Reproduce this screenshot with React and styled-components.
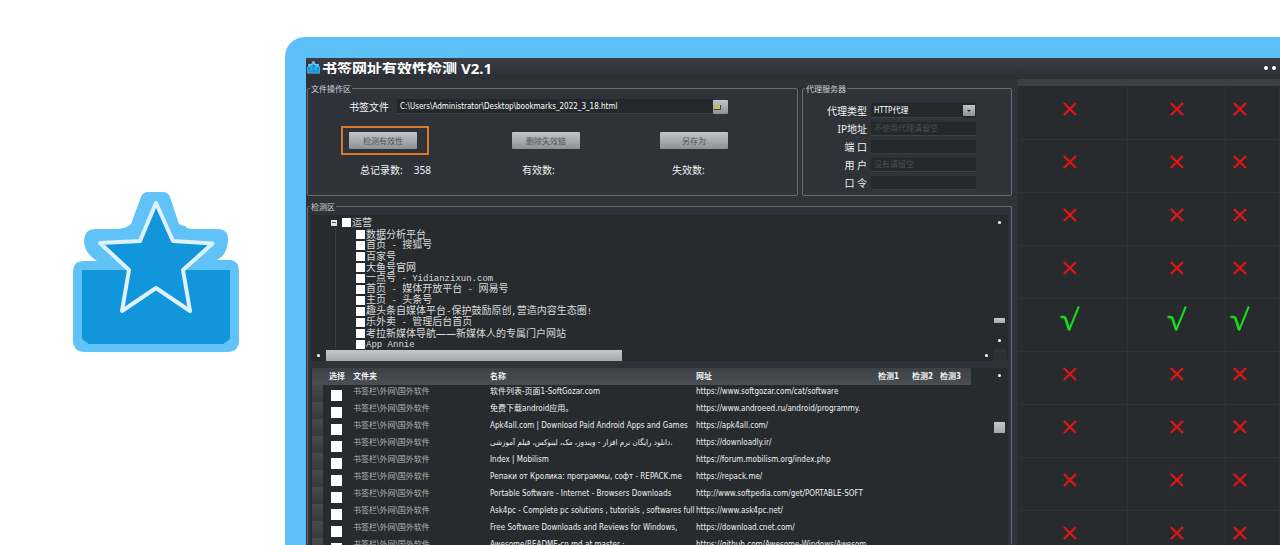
import React from 'react';
import styled, { createGlobalStyle, css } from 'styled-components';

const sky = '#5dc1f7';
const panel = '#2f3238';
const well = '#272b2d';
const line = '#686b70';
const ui = "'Noto Sans', 'Noto Sans CJK SC', sans-serif";
const dense = "'DejaVu Sans Condensed', 'Noto Sans CJK SC', sans-serif";
const silver = 'linear-gradient(#c2c5c8, #8d9095)';

const Global = createGlobalStyle`
  * { box-sizing: border-box; }
  body { margin: 0; background: #fff; font-family: ${ui}; }
`;

const Page = styled.main`
  display: flex;
  height: 100vh;
  overflow: hidden;
`;

const Brand = styled.aside`
  flex: none;
  width: 285px;
  padding: 190px 0 0 71px;
`;

const Frame = styled.section`
  flex: 1;
  min-width: 0;
  margin-top: 37px;
  padding: 21px 0 0 21px;
  background: ${sky};
  border-top-left-radius: 20px;
  overflow: hidden;
`;

const Window = styled.div`
  display: flex;
  flex-direction: column;
  height: 100%;
  background: ${panel};
  color: #e8e8e8;
  overflow: hidden;
`;

const TitleBar = styled.header`
  display: flex;
  flex: none;
  align-items: center;
  height: 21px;
  padding: 0 3px 2px 1px;
  background: linear-gradient(#3b3d43, #2b2e34);
`;

const Title = styled.h1`
  flex: 1;
  height: 12px;
  margin: 0 0 0 2px;
  overflow: hidden;
  font-size: 15px;
  line-height: 12px;
  font-weight: 700;
  color: #fff;
  white-space: nowrap;
`;

const Body = styled.div`
  display: flex;
  flex: 1;
  min-height: 0;
`;

const Workspace = styled.div`
  display: flex;
  flex: 1;
  flex-direction: column;
  gap: 5px;
  min-width: 0;
  padding: 4px 6px 0 1px;
`;

const Groups = styled.div`
  display: flex;
  gap: 4px;
`;

const Group = styled.fieldset`
  flex: ${(p) => (p.$width ? 'none' : '1')};
  width: ${(p) => p.$width || 'auto'};
  height: ${(p) => p.$height || 'auto'};
  min-width: 0;
  min-height: 0;
  margin: 0;
  padding: 0;
  border: 1px solid ${line};
  border-radius: 2px;
`;

const GroupBody = styled.div`
  height: 100%;
  padding: ${(p) => p.$pad};
`;

const Legend = styled.legend`
  margin-left: 2px;
  padding: 0 1px;
  font-size: 8px;
  line-height: 11px;
  color: #d2d2d2;
`;

const field = css`
  min-width: 0;
  margin: 0;
  border: 0;
  border-bottom: 1px solid #3d4145;
  border-radius: 0;
  padding: 0 3px;
  outline: 0;
  background: #25282b;
  color: #fff;
  font-family: ${dense};
  font-size: 8px;
  &::placeholder { color: #4b4f53; opacity: 1; }
`;

const Input = styled.input`
  ${field}
  flex: 1;
  height: ${(p) => p.$h || '14px'};
`;

const Select = styled.select`
  ${field}
  appearance: none;
  flex: 1;
  height: 15px;
`;

const FileRow = styled.div`
  display: flex;
  align-items: center;
  padding: 0 69px 0 8px;
`;

const Label = styled.label`
  width: ${(p) => p.$w};
  font-size: 10px;
  line-height: 14px;
  color: #f2f2f2;
  white-space: pre;
  text-align: ${(p) => p.$align || 'left'};
`;

const SilverButton = styled.button`
  display: flex;
  align-items: center;
  justify-content: center;
  width: ${(p) => p.$w || '68px'};
  height: ${(p) => p.$h || '17px'};
  padding: 0;
  border: 0;
  border-radius: 1px;
  background: ${silver};
  color: #505357;
  font-family: ${ui};
  font-size: 8px;
`;

const Actions = styled.div`
  display: grid;
  grid-template-columns: 171px 148px 1fr;
  align-items: center;
  margin-top: 12px;
`;

const Highlight = styled.div`
  justify-self: start;
  padding: 4px 10px 4px 6px;
  border: 2px solid #d97a2b;
`;

const Counts = styled.dl`
  display: grid;
  grid-template-columns: 162px 150px 1fr;
  margin: 8px 0 0 19px;
  font-size: 10px;
  line-height: 14px;
  color: #f2f2f2;
`;

const Count = styled.div`
  display: flex;
  gap: 11px;
  dt, dd { margin: 0; }
`;

const ProxyForm = styled.div`
  display: flex;
  flex-direction: column;
  gap: 4px;
`;

const ProxyRow = styled.div`
  display: flex;
  align-items: center;
  gap: 4px;
`;

const Detection = styled(Group)`
  flex: 1;
  border-bottom: 0;
`;

const Stack = styled.div`
  display: flex;
  flex-direction: column;
  gap: 7px;
  height: 100%;
`;

const TreePane = styled.div`
  display: grid;
  grid-template-columns: 1fr 14px;
  grid-template-rows: 134px 12px;
  flex: none;
  background: ${well};
`;

const Tree = styled.ul`
  margin: 0;
  padding: 2px 0 0 20px;
  overflow: hidden;
  list-style: none;
  color: #dadada;
`;

const Branch = styled.ul`
  margin: 0 0 0 4px;
  padding: 1px 0 0 20px;
  list-style: none;
  border-left: 1px solid #3a3e41;
`;

const TreeRow = styled.label`
  display: flex;
  align-items: center;
  gap: 1px;
  height: 11px;
  font-size: 10px;
  line-height: 11px;
  white-space: pre;
`;

const Toggle = styled.button`
  flex: none;
  width: 6px;
  height: 6px;
  margin-right: 4px;
  padding: 0;
  border: 0;
  background: linear-gradient(#555, #555) center / 4px 1px no-repeat #e4e4e4;
`;

const Latin = styled.span`
  font-family: 'Liberation Mono', monospace;
  font-size: 9px;
`;

const Check = styled.input`
  appearance: none;
  flex: none;
  display: block;
  width: ${(p) => p.$s};
  height: ${(p) => p.$s};
  margin: 0;
  background: #fff;
`;

const VBar = styled.div`
  display: flex;
  flex-direction: column;
  align-items: center;
  padding: 6px 3px 0 0;
`;

const HBar = styled.div`
  display: flex;
  align-items: center;
  padding: 0 6px;
`;

const Dot = styled.span`
  flex: none;
  width: 3px;
  height: 3px;
  border-radius: 50%;
  background: #fff;
`;

const Thumb = styled.span`
  flex: none;
  width: ${(p) => p.$w};
  height: ${(p) => p.$h};
  margin: ${(p) => p.$m || '0'};
  background: linear-gradient(#c4c6ca, #a5a8ac);
`;

const Corner = styled.div`
  margin-right: 2px;
  background: #2e3135;
`;

const ListPane = styled.div`
  display: grid;
  grid-template-columns: 1fr 14px;
  flex: 1;
  min-height: 0;
  padding-left: 1px;
  background: ${well};
  overflow: hidden;
`;

const List = styled.table`
  width: calc(100% - 23px);
  table-layout: fixed;
  border-collapse: collapse;
  align-self: start;
  font-family: ${dense};
  font-size: 8px;
  line-height: 14px;
  color: #f0f0f0;

  th, td {
    height: 17px;
    padding: 0 0 3px;
    overflow: hidden;
    text-align: left;
    white-space: nowrap;
  }
  thead tr { background: linear-gradient(#3d4045, #4b4e53); }
  th { padding: 0; font-weight: 700; }
  th:nth-child(2) { padding-left: 6px; }
  td:nth-child(2) { padding: 3px 0 0 8px; }
  tbody td:first-child { background: linear-gradient(#474a4f, #36393e); }
  td:nth-child(3) { color: #b4b4b4; }
`;

const Results = styled.table`
  flex: none;
  align-self: flex-start;
  width: 262px;
  table-layout: fixed;
  border-collapse: collapse;
  background: ${well};

  th {
    height: 7px;
    padding: 0;
    background: #3c3e44;
  }
  td {
    height: 53px;
    padding: 0 4px 10px 0;
    border: solid #2f3336;
    border-width: 0 1px 1px 0;
    text-align: center;
    vertical-align: middle;
  }
  td:nth-child(2) { padding-left: 6px; }
  td:last-child { padding-right: 24px; }
  svg { display: inline-block; vertical-align: middle; }
`;

const Cross = () => (
  <svg width="16" height="16" viewBox="0 0 16 16" role="img" aria-label="无效">
    <path d="M1.800 2 14 14M14 2 1.800 14" stroke="#e01515" strokeWidth="2.300" fill="none" />
  </svg>
);

const Tick = () => (
  <svg width="20" height="28" viewBox="0 0 20 28" role="img" aria-label="有效">
    <path d="M0.500 11H3.500Q5 11 5.500 12.500L9.200 24" stroke="#18dc18" strokeWidth="2.600" fill="none" />
    <path d="M9 24.500 18.800 0.500" stroke="#18dc18" strokeWidth="2" fill="none" />
  </svg>
);

const STAR = 'M85 13 102 51 141.500 53.500 112 80 119 121 85 98 51 121 58 80 29 53 69 51Z';

const Logo = ({ size }) => (
  <svg width={size} height={size} viewBox="0 0 170 170" aria-hidden="true">
    <path
      d="M77 2H91Q97 2 99 7L108 34Q112 36 114 36Q116 39 122 39H148Q158 40 157 51Q156 65 146 70H160Q168 71 168 82V150Q168 162 156 162H14Q2 162 2 150V82Q2 71 13 71H26Q13 63 13 50Q14 39 24 39H47Q56 38 60 34L70 7Q72 2 77 2Z"
      fill="#60c2f6"
    />
    <path d="M11 80H159V149L152 154H18L11 149Z" fill="#1296db" />
    <path d={STAR} fill="#1296db" stroke="#dff1fd" strokeWidth="4" strokeLinejoin="round" />
  </svg>
);

const FolderIcon = () => (
  <svg width="15" height="14" viewBox="0 0 15 14" aria-hidden="true">
    <path d="M1 9V7.500L3 6L4 5H5.500V6H7V9Z" fill="#c9c24a" />
    <path d="M1 9.500H7.500V5" stroke="#44443a" fill="none" />
  </svg>
);

const SelectWrap = styled.div`
  display: flex;
  align-items: center;
  flex: 1;
  min-width: 0;
  background: #25282b;
`;

const Arrow = styled.span`
  display: grid;
  place-items: center;
  flex: none;
  width: 12px;
  height: 11px;
  margin-right: 1px;
  background: ${silver};
  &::before {
    content: '';
    border: 2px solid transparent;
    border-top-color: #222;
    border-bottom: 0;
  }
`;

const sites = [
  ['数据分析平台'],
  ['首页', ' - ', '搜狐号'],
  ['百家号'],
  ['大鱼号官网'],
  ['一点号', ' - Yidianzixun.com'],
  ['首页', ' - ', '媒体开放平台', ' - ', '网易号'],
  ['主页', ' - ', '头条号'],
  ['趣头条自媒体平台', '-', '保护鼓励原创', ',', '营造内容生态圈', '!'],
  ['乐外卖', ' - ', '管理后台首页'],
  ['考拉新媒体导航——新媒体人的专属门户网站'],
  ['', 'App Annie'],
];

const links = [
  ['软件列表-页面1-SoftGozar.com', 'https://www.softgozar.com/cat/software'],
  ['免费下载android应用。', 'https://www.androeed.ru/android/programmy.'],
  ['Apk4all.com | Download Paid Android Apps and Games', 'https://apk4all.com/'],
  ['دانلود رایگان نرم افزار - ویندوز، مک، لینوکس، فیلم آموزشی.', 'https://downloadly.ir/'],
  ['Index | Mobilism', 'https://forum.mobilism.org/index.php'],
  ['Репаки от Кролика: программы, софт - REPACK.me', 'https://repack.me/'],
  ['Portable Software - Internet - Browsers Downloads', 'http://www.softpedia.com/get/PORTABLE-SOFT'],
  ['Ask4pc - Complete pc solutions , tutorials , softwares full', 'https://www.ask4pc.net/'],
  ['Free Software Downloads and Reviews for Windows,', 'https://download.cnet.com/'],
  ['Awesome/README-cn.md at master ·', 'https://github.com/Awesome-Windows/Awesom'],
];

const results = [false, false, false, false, true, false, false, false, false];

export default function App() {
  return (
    <>
      <Global />
      <Page>
        <Brand><Logo size={170} /></Brand>
        <Frame>
          <Window>
            <TitleBar>
              <Logo size={13} />
              <Title>书签网址有效性检测 V2.1</Title>
              <svg width="14" height="6" viewBox="0 0 14 6" aria-hidden="true">
                <circle cx="3" cy="3" r="2" fill="#fff" />
                <circle cx="11" cy="3" r="2" fill="#fff" />
              </svg>
            </TitleBar>
            <Body>
              <Workspace>
                <Groups>
                  <Group $height="113px">
                    <Legend>文件操作区</Legend>
                    <GroupBody $pad="5px 0 0 33px">
                      <FileRow>
                        <Label $w="48px" htmlFor="file">书签文件</Label>
                        <Input id="file" $h="15px" defaultValue="C:\Users\Administrator\Desktop\bookmarks_2022_3_18.html" />
                        <SilverButton type="button" $w="15px" $h="14px" aria-label="浏览"><FolderIcon /></SilverButton>
                      </FileRow>
                      <Actions>
                        <Highlight><SilverButton type="button">检测有效性</SilverButton></Highlight>
                        <SilverButton type="button">删除失效链</SilverButton>
                        <SilverButton type="button">另存为</SilverButton>
                      </Actions>
                      <Counts>
                        <Count><dt>总记录数:</dt><dd>358</dd></Count>
                        <Count><dt>有效数:</dt></Count>
                        <Count><dt>失效数:</dt></Count>
                      </Counts>
                    </GroupBody>
                  </Group>
                  <Group $width="210px" $height="113px">
                    <Legend>代理服务器</Legend>
                    <GroupBody $pad="9px 35px 0 0">
                      <ProxyForm>
                        <ProxyRow>
                          <Label $w="64px" $align="right" htmlFor="type">代理类型</Label>
                          <SelectWrap>
                            <Select id="type"><option>HTTP代理</option></Select>
                            <Arrow />
                          </SelectWrap>
                        </ProxyRow>
                        <ProxyRow>
                          <Label $w="64px" $align="right" htmlFor="ip">IP地址</Label>
                          <Input id="ip" placeholder="不使用代理请留空" />
                        </ProxyRow>
                        <ProxyRow>
                          <Label $w="64px" $align="right" htmlFor="port">端 口</Label>
                          <Input id="port" />
                        </ProxyRow>
                        <ProxyRow>
                          <Label $w="64px" $align="right" htmlFor="user">用 户</Label>
                          <Input id="user" placeholder="没有请留空" />
                        </ProxyRow>
                        <ProxyRow>
                          <Label $w="64px" $align="right" htmlFor="pass">口 令</Label>
                          <Input id="pass" type="password" />
                        </ProxyRow>
                      </ProxyForm>
                    </GroupBody>
                  </Group>
                </Groups>
                <Detection>
                  <Legend>检测区</Legend>
                  <GroupBody $pad="3px 3px 0">
                    <Stack>
                      <TreePane>
                        <Tree>
                          <li>
                            <TreeRow as="div">
                              <Toggle type="button" aria-label="折叠" />
                              <Check type="checkbox" id="root-node" $s="9px" />
                              <label htmlFor="root-node">运营</label>
                            </TreeRow>
                            <Branch>
                              {sites.map((parts) => (
                                <li key={parts.join('')}>
                                  <TreeRow>
                                    <Check type="checkbox" $s="9px" />
                                    <span>{parts.map((t, i) => (i % 2 ? <Latin key={i}>{t}</Latin> : t))}</span>
                                  </TreeRow>
                                </li>
                              ))}
                            </Branch>
                          </li>
                        </Tree>
                        <VBar><Dot /><Thumb $w="11px" $h="5px" $m="94px 0 16px" /><Dot /></VBar>
                        <HBar>
                          <Dot />
                          <Thumb $w="296px" $h="11px" $m="0 auto 0 6px" />
                          <Dot />
                        </HBar>
                        <Corner />
                      </TreePane>
                      <ListPane>
                        <List>
                          <colgroup>
                            <col style={{ width: 11 }} />
                            <col style={{ width: 30 }} />
                            <col style={{ width: 137 }} />
                            <col style={{ width: 206 }} />
                            <col />
                            <col style={{ width: 34 }} />
                            <col style={{ width: 28 }} />
                            <col style={{ width: 31 }} />
                          </colgroup>
                          <thead>
                            <tr>
                              <th /><th>选择</th><th>文件夹</th><th>名称</th><th>网址</th>
                              <th>检测1</th><th>检测2</th><th>检测3</th>
                            </tr>
                          </thead>
                          <tbody>
                            {links.map(([name, url]) => (
                              <tr key={url}>
                                <td />
                                <td><Check type="checkbox" $s="11px" aria-label={name} /></td>
                                <td>书签栏\外网\国外软件</td>
                                <td>{name}</td>
                                <td>{url}</td>
                                <td /><td /><td />
                              </tr>
                            ))}
                          </tbody>
                        </List>
                        <VBar><Dot /><Thumb $w="11px" $h="11px" $m="45px 0 0" /></VBar>
                      </ListPane>
                    </Stack>
                  </GroupBody>
                </Detection>
              </Workspace>
              <Results>
                <colgroup>
                  <col style={{ width: 109 }} />
                  <col style={{ width: 98 }} />
                  <col />
                </colgroup>
                <thead><tr><th /><th /><th /></tr></thead>
                <tbody>
                  {results.map((ok, i) => (
                    <tr key={i}>
                      {[0, 1, 2].map((c) => <td key={c}>{ok ? <Tick /> : <Cross />}</td>)}
                    </tr>
                  ))}
                </tbody>
              </Results>
            </Body>
          </Window>
        </Frame>
      </Page>
    </>
  );
}
